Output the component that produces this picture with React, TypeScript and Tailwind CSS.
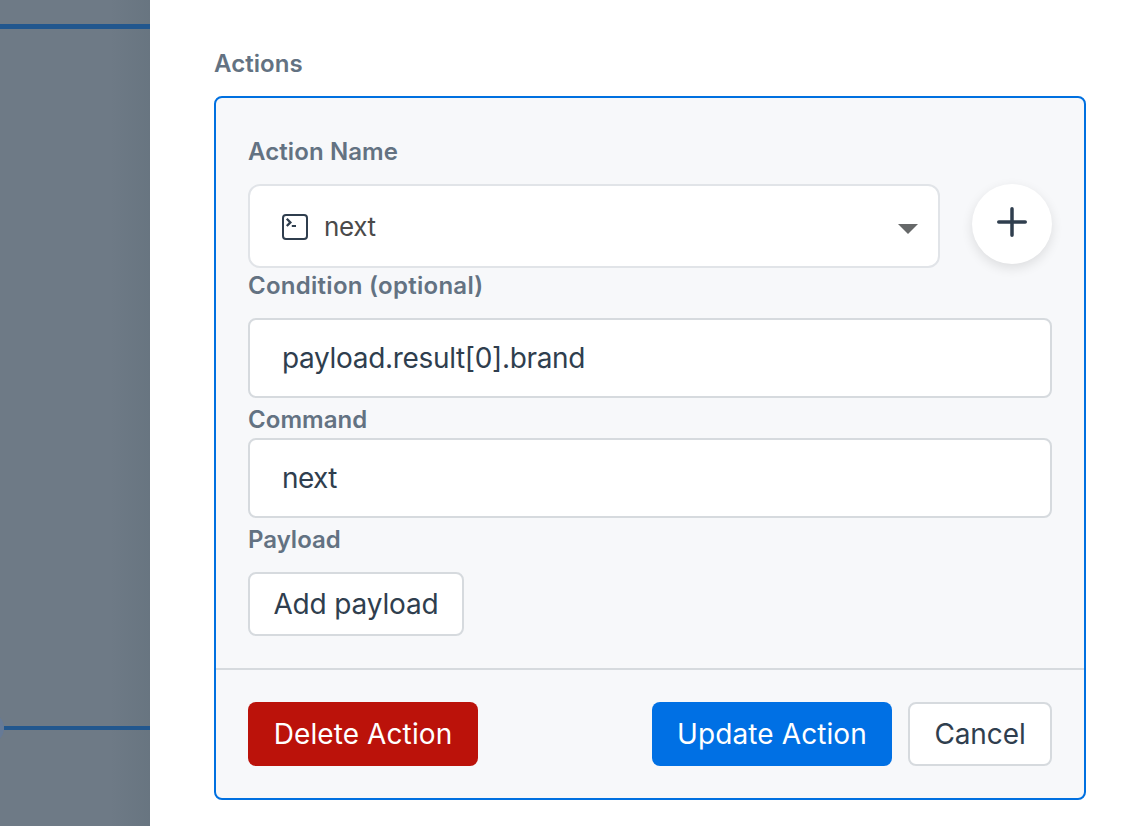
import type { ReactNode } from 'react';

function Label({ children, className = '' }: { children: ReactNode; className?: string }) {
  return (
    <div className={`flex h-8 items-center whitespace-nowrap text-[24px] font-semibold leading-8 text-[#637282] ${className}`}>
      {children}
    </div>
  );
}

function TextField({ value, textClass, className = '' }: { value: string; textClass: string; className?: string }) {
  return (
    <div className={`flex h-20 items-center rounded-lg border-2 border-[#d6dade] bg-white pl-8 text-[28px] text-[#2f3e4e] ${className}`}>
      <span className={textClass}>{value}</span>
    </div>
  );
}

function Button({ children, className }: { children: ReactNode; className: string }) {
  return (
    <button className={`flex h-16 items-center justify-center whitespace-nowrap rounded-lg text-[28px] ${className}`}>
      {children}
    </button>
  );
}

function CommandIcon() {
  return (
    <svg width="26" height="26" viewBox="0 0 26 26" fill="none" stroke="#2f3e4e" className="mt-0.5 shrink-0">
      <rect x="1" y="1" width="24" height="24" rx="3" strokeWidth="2" />
      <path d="M4.8 4.8 L8.4 8.4 L4.8 12" strokeWidth="2.3" />
      <path d="M9.8 12h4.2" strokeWidth="2" />
    </svg>
  );
}

function Canvas() {
  return (
    <div className="relative h-full w-[150px] shrink-0 overflow-hidden bg-[#6e7a86]">
      <div className="absolute inset-y-0 right-0 w-10 bg-linear-to-l from-[#62707b]/50 to-transparent" />
      <div className="absolute top-6 left-0 h-[5px] w-full bg-[#22578e]" />
      <div className="absolute top-[726px] left-1 h-1 w-full bg-[#22578e]" />
      <div className="absolute top-[712px] -left-7 size-8 rounded-full bg-[#667a96]" />
    </div>
  );
}

export default function App() {
  return (
    <div className="flex h-[826px] w-[1146px] overflow-hidden bg-white font-['Inter','Liberation_Sans',sans-serif]">
      <Canvas />
      <main className="flex-1 pt-12 pr-[60px] pl-16">
        <Label className="tracking-[0.05px]">Actions</Label>
        <section className="mt-4 h-[704px] rounded-lg border-2 border-[#0070e0] bg-[#f7f8fa]">
          <div className="h-[572px] border-b-2 border-[#d6dade] px-8 pt-[38px]">
            <Label className="tracking-[0.1px]">Action Name</Label>
            <div className="mt-4 flex gap-8">
              <div className="flex h-[84px] flex-1 items-center rounded-xl border-2 border-[#e1e4e8] bg-white pr-[20px] pl-8">
                <CommandIcon />
                <span className="mt-px ml-4 flex-1 text-[26px] tracking-[-0.4px] text-[#4a4a4a]">next</span>
                <svg width="20" height="10" viewBox="0 0 20 10" className="mt-1.5">
                  <path d="M0 0h20L10 10z" fill="#666869" />
                </svg>
              </div>
              <button className="flex size-20 items-center justify-center rounded-full bg-white pb-1 shadow-[0_4px_12px_rgba(0,0,0,0.11)]">
                <svg width="30" height="30" viewBox="0 0 30 30" stroke="#2f3e4e" strokeWidth="3.5" strokeLinecap="round">
                  <path d="M15 1.75v26.5M1.75 15h26.5" />
                </svg>
              </button>
            </div>
            <Label className="mt-0.5 tracking-[0.27px]">Condition (optional)</Label>
            <TextField className="mt-4" value="payload.result[0].brand" textClass="tracking-[-0.33px]" />
            <Label className="mt-1.5 tracking-[0.05px]">Command</Label>
            <TextField className="mt-0.5" value="next" textClass="tracking-[-0.6px]" />
            <Label className="mt-1.5">Payload</Label>
            <Button className="mt-4 w-[216px] border-2 border-[#d6dade] bg-white tracking-[-0.15px] text-[#2f3e4e]">Add payload</Button>
          </div>
          <div className="flex px-8 pt-8">
            <Button className="w-[230px] bg-[#bb120a] tracking-[0.1px] text-white">Delete Action</Button>
            <Button className="ml-auto w-60 bg-[#0070e4] tracking-[0.1px] text-white">Update Action</Button>
            <Button className="ml-4 w-36 border-2 border-[#d6dade] bg-white tracking-[-0.1px] text-[#2f3e4e]">Cancel</Button>
          </div>
        </section>
      </main>
    </div>
  );
}
